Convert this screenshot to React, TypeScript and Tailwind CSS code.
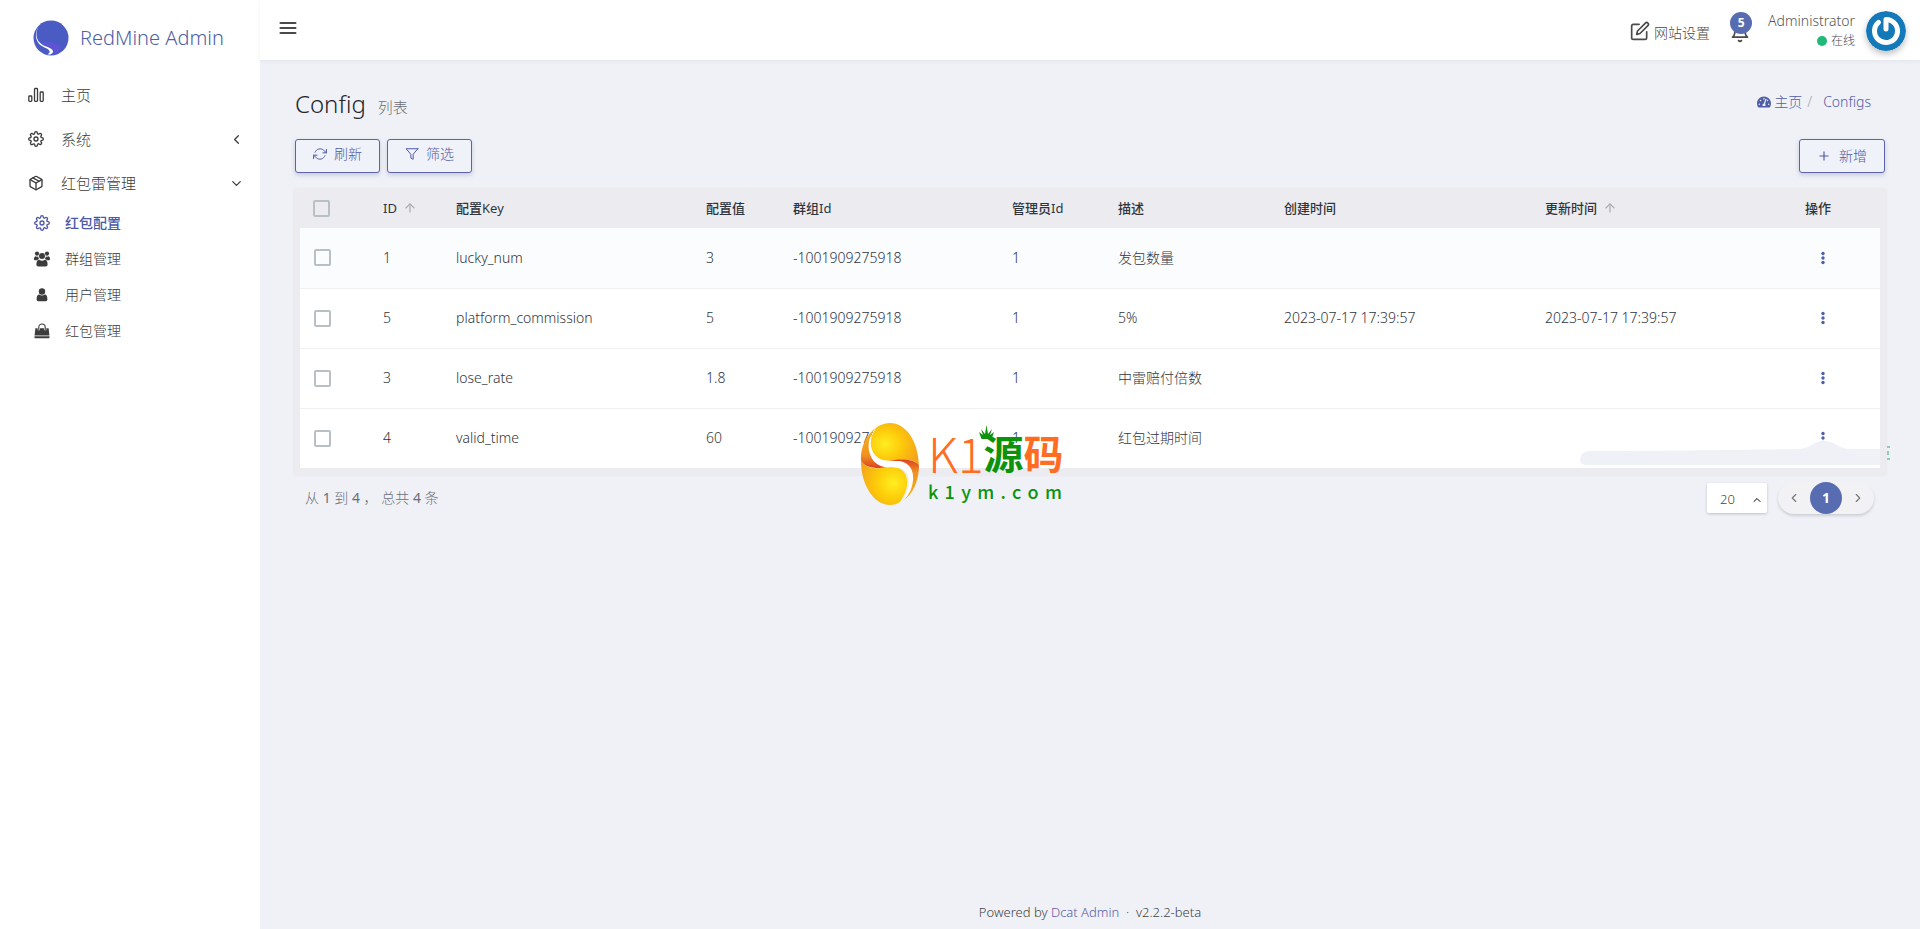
import type { ReactNode } from "react";
import { FiArrowUp, FiBell, FiChevronDown, FiChevronLeft, FiChevronRight, FiChevronUp, FiEdit, FiFilter, FiMenu, FiPackage, FiPlus, FiRefreshCw, FiSettings } from "react-icons/fi";
import { FaTachometerAlt } from "react-icons/fa";

type Row = { id: number; key: string; value: string; desc: string; created?: string; updated?: string };

const rows: Row[] = [
  { id: 1, key: "lucky_num", value: "3", desc: "发包数量" },
  { id: 5, key: "platform_commission", value: "5", desc: "5%", created: "2023-07-17 17:39:57", updated: "2023-07-17 17:39:57" },
  { id: 3, key: "lose_rate", value: "1.8", desc: "中雷赔付倍数" },
  { id: 4, key: "valid_time", value: "60", desc: "红包过期时间" },
];

const checkbox = "block size-[17px] appearance-none rounded-[2px] border-2 border-[#b9c0c5] checked:bg-[#586cb1]";
const outlineButton = "flex h-[34px] rounded-[3px] border border-[#5c62ab] bg-[#eff2f9] text-sm text-[#5057a5] shadow-[0_2px_4px_rgba(60,70,120,0.22)]";

function BarsIcon() {
  return (
    <svg viewBox="0 0 16 16" className="size-4" fill="none" stroke="currentColor" strokeWidth="1.3">
      <rect x="0.8" y="9" width="3" height="5.3" rx="0.7" />
      <rect x="6.5" y="1.5" width="3" height="12.8" rx="0.7" />
      <rect x="12.2" y="5" width="3" height="9.3" rx="0.7" />
    </svg>
  );
}

function GroupIcon() {
  return (
    <svg viewBox="0 0 16 16" className="size-4" fill="currentColor">
      <circle cx="3" cy="2.6" r="2.1" />
      <circle cx="13" cy="2.6" r="2.1" />
      <circle cx="8" cy="5" r="3" />
      <path d="M0 8.200C0 6 .8 5.200 1.800 5.200c.9.6 1.700.6 2.400.4.1 1 .4 1.800.9 2.400-.9.200-1.500.500-2 1.200H1.200C.5 9.200 0 8.900 0 8.200z" />
      <path d="M16 8.200c0-2.200-.8-3-1.800-3-.9.6-1.700.6-2.400.4-.1 1-.4 1.800-.9 2.400.9.200 1.500.5 2 1.200h1.900c.7 0 1.200-.3 1.200-1z" />
      <path d="M2.400 13.400c0-3 1-4.700 2.900-4.700 1.700 1.300 3.700 1.300 5.400 0 1.900 0 2.900 1.700 2.900 4.700 0 1.300-.8 2-2 2H4.400c-1.200 0-2-.7-2-2z" />
    </svg>
  );
}

function UserIcon() {
  return (
    <svg viewBox="0 0 16 16" className="size-4" fill="currentColor">
      <circle cx="8" cy="4.500" r="3.200" />
      <path d="M2.600 12.300c0-3 .9-4.700 2.700-4.700 1.600 1.200 3.800 1.200 5.400 0 1.800 0 2.700 1.700 2.700 4.700 0 1.200-.6 2-1.700 2H4.300c-1.100 0-1.700-.8-1.700-2z" />
    </svg>
  );
}

function BagIcon() {
  return (
    <svg viewBox="0 0 16 16" className="size-4" fill="currentColor">
      <path d="M1.400 5.300h13.200l.8 7.200H.6z" />
      <path d="M.5 13.200h15l.1 1.100c0 .5-.3.900-.8.900H1.200c-.5 0-.9-.4-.8-.9z" />
      <path d="M4.800 7.300V4.200a3.200 3.200 0 0 1 6.400 0v3.100" fill="none" stroke="#fff" strokeWidth="2.200" />
      <path d="M4.800 7.300V4.200a3.200 3.200 0 0 1 6.400 0v3.100" fill="none" stroke="currentColor" strokeWidth="1.100" />
    </svg>
  );
}

function BrandIcon() {
  return (
    <svg viewBox="0 0 36 36" className="size-9">
      <circle cx="18" cy="18" r="17.500" fill="#4a5cc4" />
      <path d="M8 21c4 2.500 9 1 13 2 6 1.500 8 4.500 6 7.500-1 1.500-3 2.500-5 3 0-5-3-6-8-8-3-1.200-5-2.200-6-4.500z" fill="#6152d8" />
      <path d="M5.500 6.500C2 13 3 20.500 9 24.500c4.500 2.700 10 3.200 11 6.500.3 1.500-.8 2.500-2.200 3.200-1.300.3-2.300.2-3.300 0 2-1 2.500-2 2-3.200-1-2.500-5-3-8.500-5.500C2 21 1.500 13 5.500 6.500z" fill="#fff" />
    </svg>
  );
}

function PowerAvatar() {
  return (
    <svg viewBox="0 0 40 40" className="size-10 rounded-full shadow-[0_3px_6px_rgba(0,0,0,0.25)]" role="img" aria-label="Administrator">
      <circle cx="20" cy="20" r="20" fill="#1379b8" />
      <g fill="none" stroke="#fff" strokeWidth="5" strokeLinecap="round" strokeLinejoin="round">
        <path d="M20 18V8.500A11.500 11.500 0 1 1 12.500 11.300" />
      </g>
    </svg>
  );
}

function MenuItem({ icon, label, tail }: { icon: ReactNode; label: string; tail?: ReactNode }) {
  return (
    <a href="#" className="flex h-11 items-center pr-4 pl-7 text-[15px]">
      <span className="w-[33px] text-base">{icon}</span>
      <span className="flex-1">{label}</span>
      {tail}
    </a>
  );
}

function SubItem({ icon, label, active }: { icon: ReactNode; label: string; active?: boolean }) {
  return (
    <a href="#" className={active ? "flex h-9 items-center pl-[34px] text-sm font-medium text-[#4c58a8]" : "flex h-9 items-center pl-[34px] text-sm"}>
      <span className="w-[31px] text-base">{icon}</span>
      {label}
    </a>
  );
}

function Sidebar() {
  return (
    <aside className="w-[260px] shrink-0 bg-white text-[#3c3c3c]">
      <a href="#" className="flex h-[73px] items-center gap-[11px] pt-[3px] pl-[33px] text-xl text-[#4f5ea6]">
        <BrandIcon />
        <span>RedMine Admin</span>
      </a>
      <nav>
        <MenuItem icon={<BarsIcon />} label="主页" />
        <MenuItem icon={<FiSettings />} label="系统" tail={<FiChevronLeft />} />
        <MenuItem icon={<FiPackage />} label="红包雷管理" tail={<FiChevronDown />} />
        <SubItem icon={<FiSettings />} label="红包配置" active />
        <SubItem icon={<GroupIcon />} label="群组管理" />
        <SubItem icon={<UserIcon />} label="用户管理" />
        <SubItem icon={<BagIcon />} label="红包管理" />
      </nav>
    </aside>
  );
}

function TopBar() {
  return (
    <header className="flex h-[60px] items-center justify-between bg-white pt-px pr-[14px] pl-[18px] text-[#4a4a4a] shadow-[0_1px_4px_rgba(60,70,100,0.08)]">
      <button type="button" aria-label="菜单" className="pb-[6px] text-xl">
        <FiMenu strokeWidth={2.500} />
      </button>
      <div className="flex items-center">
        <a href="#" className="flex items-center gap-1 text-sm">
          <FiEdit className="size-5" />
          <span className="pt-1">网站设置</span>
        </a>
        <button type="button" aria-label="通知" className="relative ml-5 text-xl">
          <FiBell className="mt-1" />
          <span className="absolute -top-[7px] left-0 flex size-[22px] items-center justify-center rounded-full bg-[#586cb1] text-xs font-bold text-white">5</span>
        </button>
        <div className="ml-[18px] flex flex-col items-end text-sm leading-5">
          <span className="text-[#555]">Administrator</span>
          <span className="flex items-center gap-1 text-xs leading-5">
            <i className="size-[10px] rounded-full bg-[#21b978]" />
            在线
          </span>
        </div>
        <a href="#" className="ml-[11px]">
          <PowerAvatar />
        </a>
      </div>
    </header>
  );
}

function SortMark() {
  return <FiArrowUp className="ml-[6px] inline size-[14px] align-[-2px] text-[#a8abb3]" />;
}

function ConfigTable() {
  return (
    <div className="relative mt-[15px] rounded bg-[#ececf0] px-[7px] pb-2 shadow-[0_0_3px_#ececf0]">
      <table className="w-full table-fixed border-collapse text-left text-sm text-[#30353d]">
        <colgroup>
          <col className="w-[83px]" />
          <col className="w-[73px]" />
          <col className="w-[250px]" />
          <col className="w-[87px]" />
          <col className="w-[219px]" />
          <col className="w-[106px]" />
          <col className="w-[166px]" />
          <col className="w-[261px]" />
          <col className="w-[260px]" />
          <col className="w-[75px]" />
        </colgroup>
        <thead>
          <tr className="h-10 text-[13px] [&>th]:font-medium">
            <th className="pl-[13px]">
              <input type="checkbox" aria-label="全选" className={checkbox} />
            </th>
            <th><span className="font-normal">ID</span><SortMark /></th>
            <th>配置<span className="font-normal">Key</span></th>
            <th>配置值</th>
            <th>群组<span className="font-normal">Id</span></th>
            <th>管理员<span className="font-normal">Id</span></th>
            <th>描述</th>
            <th>创建时间</th>
            <th>更新时间<SortMark /></th>
            <th>操作</th>
          </tr>
        </thead>
        <tbody>
          {rows.map((row, i) => (
            <tr key={row.id} className={i === 0 ? "h-[60px] bg-[#fbfcfe]" : "h-[60px] border-t border-[#f0f1f5] bg-white"}>
              <td className="pl-[14px]">
                <input type="checkbox" aria-label={row.key} className={checkbox} />
              </td>
              <td>{row.id}</td>
              <td>{row.key}</td>
              <td>{row.value}</td>
              <td>-1001909275918</td>
              <td>1</td>
              <td>{row.desc}</td>
              <td>{row.created}</td>
              <td>{row.updated}</td>
              <td className="pl-4">
                <button type="button" aria-label="操作" className="block">
                  <svg viewBox="0 0 4 14" className="h-[14px] w-1" fill="#4f5ea9">
                    <circle cx="2" cy="2.500" r="1.700" />
                    <circle cx="2" cy="7" r="1.700" />
                    <circle cx="2" cy="11.500" r="1.700" />
                  </svg>
                </button>
              </td>
            </tr>
          ))}
        </tbody>
      </table>
      <svg viewBox="0 0 310 26" className="absolute right-[-3px] bottom-[9px] h-[26px] w-[310px]" aria-hidden="true">
        <path d="M0 19c0-6 4-9 12-9 70 0 150-1 205-2 14 0 16-8 27-8s14 8 26 8h30v16H8c-6 0-8-2-8-5z" fill="#eff1f6" />
        <path d="M307 6h3M308 10v4M307 18h3" stroke="#6cc49a" strokeWidth="1.500" />
      </svg>
      <Watermark />
    </div>
  );
}

function Watermark() {
  return (
    <div className="pointer-events-none absolute top-[235px] left-[567px] flex gap-2">
      <svg viewBox="0 0 60 82" className="h-[82px] w-[60px]" aria-hidden="true">
        <defs>
          <radialGradient id="top" cx="0.300" cy="0.500" r="0.700">
            <stop offset="0" stopColor="#ffee20" />
            <stop offset="0.500" stopColor="#fdc90a" />
            <stop offset="1" stopColor="#f4a51a" />
          </radialGradient>
          <radialGradient id="bottom" cx="0.700" cy="0.500" r="0.750">
            <stop offset="0" stopColor="#ffee20" />
            <stop offset="0.500" stopColor="#fdcb08" />
            <stop offset="1" stopColor="#f4a51a" />
          </radialGradient>
          <linearGradient id="right" x1="0" x2="0" y1="0" y2="1">
            <stop offset="0" stopColor="#dd4023" />
            <stop offset="0.300" stopColor="#f09020" />
            <stop offset="1" stopColor="#f9b916" />
          </linearGradient>
          <linearGradient id="left" x1="0" x2="0" y1="0" y2="1">
            <stop offset="0" stopColor="#f9b916" />
            <stop offset="0.700" stopColor="#f09020" />
            <stop offset="1" stopColor="#dd4023" />
          </linearGradient>
        </defs>
        <path d="M17 4C22 1 26 0 30 0c16 0 28 18 29 42-4-5-12-6-20-5-9 1-17 2-23-3C8 26 9 12 17 4z" fill="url(#top)" />
        <path d="M17 4C6 11 0 25 1 38c3 5 10 7 18 7 6 0 11-2 15-3-9 1-17-2-22-8C6 26 8 13 17 4z" fill="url(#left)" />
        <path d="M1 38c4 6 12 8 20 7 10-1 17-2 22 3 7 7 5 20-3 31-3 2-6 3-10 3C14 82 1 62 1 38z" fill="url(#bottom)" />
        <path d="M59 42c0 16-6 29-16 36 9-9 12-23 6-32-4-6-11-8-20-8 9-2 24-3 30 4z" fill="url(#right)" />
        <path d="M17 4C9 13 9 25 15 32c6 7 15 6 24 6 8 1 13 6 14 14 1 11-4 20-10 26 6-10 9-22 3-29-5-6-13-5-21-5C15 43 9 34 9 24c0-8 3-15 8-20z" fill="#fff" />
      </svg>
      <div className="relative w-[134px] font-['Noto_Sans_CJK_SC'] leading-none">
        <div className="flex h-[57px] items-center justify-between text-[#ff6c22]">
          <span className="text-5xl leading-[50px]">K1</span>
          <span className="flex text-[40px] leading-[50px] font-bold">
            <span className="text-[#0c930b]">源</span>码
          </span>
        </div>
        <svg viewBox="0 0 15 15" className="absolute top-[2px] left-[51px] size-[15px]" fill="#0c930b" aria-hidden="true">
          <path d="M2.500 14 0 7l4 3-2-6 4 5 1.500-9L9 9l4-5-2 6 4-3-2.500 7z" />
        </svg>
        <div className="flex justify-between pt-px text-lg leading-5 font-medium text-[#0c930b]">
          {["k", "1", "y", "m", ".", "c", "o", "m"].map((c, i) => (
            <span key={i}>{c}</span>
          ))}
        </div>
      </div>
    </div>
  );
}

function Pager() {
  return (
    <div className="mt-[6px] flex items-center justify-between pr-[13px] pl-3 text-sm">
      <p className="text-[#6b6e76]">
        从 <b>1</b> 到 <b>4</b> ，&nbsp;总共 <b>4</b> 条
      </p>
      <div className="flex items-center gap-[11px]">
        <label className="relative">
          <select aria-label="每页条数" className="block h-[30px] w-[60px] appearance-none rounded-[2px] bg-white pt-[2px] pl-[13px] text-[13px] text-[#444] shadow-[0_1px_3px_rgba(0,0,0,0.2)]">
            <option>20</option>
          </select>
          <FiChevronUp className="absolute top-[11px] right-1 size-3" />
        </label>
        <nav aria-label="分页" className="flex h-8 items-center rounded-full bg-[#f2f2f4] text-[#777] shadow-[0_2px_3px_rgba(0,0,0,0.14)]">
          <a href="#" aria-label="上一页" className="flex w-8 justify-center"><FiChevronLeft /></a>
          <a href="#" className="flex size-8 items-center justify-center rounded-full bg-[#586cb1] font-bold text-white">1</a>
          <a href="#" aria-label="下一页" className="flex w-8 justify-center"><FiChevronRight /></a>
        </nav>
      </div>
    </div>
  );
}

export default function App() {
  return (
    <div className="flex min-h-screen bg-[#eff1f7] font-['Noto_Sans','Noto_Sans_CJK_SC',sans-serif] font-light">
      <Sidebar />
      <div className="flex min-w-0 flex-1 flex-col">
        <TopBar />
        <main className="flex-1 px-[33px] pt-[26px]">
          <div className="flex items-start justify-between pr-4 pl-[2px]">
            <h1 className="flex items-baseline gap-3 text-2xl leading-9 text-[#22252b]">
              Config <small className="text-[15px] text-[#6b6e76]">列表</small>
            </h1>
            <nav aria-label="breadcrumb" className="flex items-center pt-[6px] text-sm text-[#4f5ea9]">
              <a href="#" className="flex items-center gap-[3px]"><FaTachometerAlt />主页</a>
              <span className="ml-[5px] pr-[11px] text-[#a0a3ad]">/</span>
              <a href="#">Configs</a>
            </nav>
          </div>
          <div className="mt-[14px] flex justify-between px-[2px]">
            <div className="flex gap-[7px]">
              <button type="button" className={`${outlineButton} gap-[7px] px-[17px] pt-1`}>
                <FiRefreshCw className="mt-[3px]" strokeWidth={1.700} />刷新
              </button>
              <button type="button" className={`${outlineButton} gap-[7px] px-[17px] pt-1`}>
                <FiFilter className="mt-[3px]" strokeWidth={1.700} />筛选
              </button>
            </div>
            <button type="button" className={`${outlineButton} items-center gap-2 px-[17px]`}>
              <FiPlus />新增
            </button>
          </div>
          <ConfigTable />
          <Pager />
        </main>
        <footer className="pb-[9px] text-center text-[13px] leading-4 text-[#444]">
          Powered by <a href="#" className="text-[#5a5ca8]">Dcat Admin</a>&nbsp; · &nbsp;v2.2.2-beta
        </footer>
      </div>
    </div>
  );
}
